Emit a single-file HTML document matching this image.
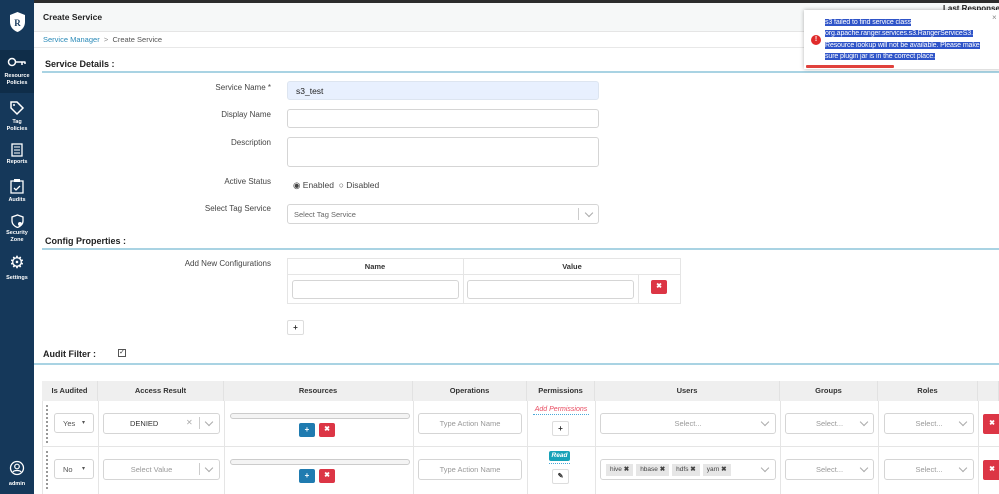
<!DOCTYPE html>
<html><head><meta charset="utf-8"><style>
*{box-sizing:border-box;margin:0;padding:0}
body{width:999px;height:494px;overflow:hidden;position:relative;background:#fff;font-family:"Liberation Sans",sans-serif;font-size:8px;color:#333}
.a{position:absolute}
.sb{left:0;top:0;width:34px;height:494px;background:#15385a}
.si{position:absolute;left:0;width:34px;text-align:center;color:#fff;font-size:5.5px;font-weight:bold;line-height:7px}
.lbl{position:absolute;right:728px;font-size:8px;color:#444;text-align:right}
.inp{position:absolute;border:1px solid #d5d5d5;border-radius:3px;background:#fff}
.hd{position:absolute;font-weight:bold;font-size:9px;color:#222}
.ln{position:absolute;left:42px;right:0;height:2px;background:#a9d3e3}
.th{position:absolute;top:381px;height:20px;background:#efefef;border-right:1px solid #e2e2e2;font-weight:bold;font-size:7.5px;text-align:center;line-height:20px;color:#333}
.ph{color:#999;font-size:7.5px;text-align:center}
.btn{position:absolute;width:16px;height:14px;border-radius:2px;color:#fff;font-size:8px;text-align:center;line-height:14px;font-weight:bold}
.bl{background:#1f7bb0}.rd{background:#dc3545}
.wb{position:absolute;border:1px solid #ddd;border-radius:2px;background:#fff;text-align:center;font-size:8px;font-weight:bold;color:#333}
.chev{position:absolute;width:8px;height:8px}
.chev:before{content:"";position:absolute;left:1px;top:0;width:5px;height:5px;border-right:1px solid #aaa;border-bottom:1px solid #aaa;transform:rotate(45deg)}
.tag{display:inline-block;background:#e6e6e6;padding:0 4px;margin-right:3px;height:12px;line-height:12px;font-size:6.5px;color:#444}
</style></head><body>
<div class="a" style="left:0;top:0;width:999px;height:3px;background:#2c2c2c"></div>
<div class="a" style="left:34px;top:3px;width:965px;height:29px;background:#f6f8f8;border-bottom:1px solid #e5e5e5"></div>
<div class="a" style="left:43px;top:12px;font-size:8.5px;font-weight:bold;color:#222">Create Service</div>
<div class="a" style="left:943px;top:4px;font-size:8px;font-weight:bold;color:#222;white-space:nowrap">Last Response Time</div>
<div class="a" style="left:34px;top:32px;width:965px;height:16px;border-bottom:1px solid #e8e8e8"></div>
<div class="a" style="left:43px;top:35px;font-size:7.5px;color:#2a8ab8">Service Manager <span style="color:#888">&nbsp;&gt;&nbsp;</span> <span style="color:#555">Create Service</span></div>

<div class="a sb"></div>
<div class="a" style="left:0;top:50px;width:34px;height:43px;background:#0f2d49"></div>
<svg class="a" style="left:8px;top:11px" width="19" height="22" viewBox="0 0 19 22"><path d="M9.5 1L17 4v7c0 5-3.5 8.5-7.5 10C5.5 19.5 2 16 2 11V4z" fill="#fff"/><text x="9.5" y="15" font-size="9" font-weight="bold" text-anchor="middle" fill="#15385a" font-family="Liberation Serif">R</text></svg>
<svg class="a" style="left:7px;top:57px" width="20" height="10"><circle cx="5" cy="5" r="3.5" fill="none" stroke="#fff" stroke-width="1.5"/><path d="M8.5 5h10M15 5v3M18 5v2" stroke="#fff" stroke-width="1.5" fill="none"/></svg>
<div class="si" style="top:73px">Resource<br>Policies</div>
<svg class="a" style="left:9px;top:100px" width="16" height="16"><path d="M2 2h6l6 6-6 6-6-6z" fill="none" stroke="#fff" stroke-width="1.5"/><circle cx="5" cy="5" r="1" fill="#fff"/></svg>
<div class="si" style="top:119px">Tag<br>Policies</div>
<svg class="a" style="left:11px;top:143px" width="12" height="14"><rect x="1" y="1" width="10" height="12" fill="none" stroke="#fff" stroke-width="1.3"/><path d="M3 4h6M3 7h6M3 10h6" stroke="#fff"/></svg>
<div class="si" style="top:159px">Reports</div>
<svg class="a" style="left:10px;top:178px" width="14" height="16"><path d="M1 3h12v12H1z" fill="none" stroke="#fff" stroke-width="1.3"/><rect x="4" y="1" width="6" height="3" fill="#fff"/><path d="M4 10l2 2 4-4" stroke="#fff" fill="none" stroke-width="1.3"/></svg>
<div class="si" style="top:197px">Audits</div>
<svg class="a" style="left:11px;top:214px" width="13" height="14"><path d="M6.5 1L12 3v4c0 3-2.5 5.5-5.5 6.5C3.5 12.5 1 10 1 7V3z" fill="none" stroke="#fff" stroke-width="1.3"/><circle cx="9" cy="10" r="2" fill="#fff"/></svg>
<div class="si" style="top:230px">Security<br>Zone</div>
<div class="a" style="left:5px;top:253px;width:24px;text-align:center;color:#fff;font-size:17px;line-height:20px">⚙</div>
<div class="si" style="top:275px">Settings</div>
<svg class="a" style="left:9px;top:460px" width="16" height="16"><circle cx="8" cy="8" r="6.5" fill="none" stroke="#fff" stroke-width="1.3"/><circle cx="8" cy="6.5" r="2.3" fill="none" stroke="#fff" stroke-width="1.2"/><path d="M4 12c1-2 7-2 8 0" stroke="#fff" fill="none" stroke-width="1.2"/></svg>
<div class="si" style="top:481px">admin</div>

<div class="hd" style="left:45px;top:59px">Service Details :</div>
<div class="ln" style="top:71px"></div>
<div class="lbl" style="top:83px">Service Name *</div>
<div class="inp" style="left:287px;top:81px;width:312px;height:19px;background:#e8f0fe;border-color:#dde5f0;font-size:8.5px;padding:4px 8px;color:#222">s3_test</div>
<div class="lbl" style="top:110px">Display Name</div>
<div class="inp" style="left:287px;top:109px;width:312px;height:19px"></div>
<div class="lbl" style="top:138px">Description</div>
<div class="inp" style="left:287px;top:137px;width:312px;height:30px"></div>
<div class="lbl" style="top:177px">Active Status</div>
<div class="a" style="left:293px;top:180px;font-size:8.5px;color:#444">◉ Enabled &nbsp;○ Disabled</div>
<div class="lbl" style="top:204px">Select Tag Service</div>
<div class="inp" style="left:287px;top:204px;width:312px;height:20px;font-size:7.5px;color:#666;padding:5px 6px">Select Tag Service</div>
<div class="a" style="left:578px;top:208px;width:1px;height:12px;background:#ccc"></div>
<div class="chev" style="left:585px;top:210px"></div>

<div class="hd" style="left:45px;top:236px">Config Properties :</div>
<div class="ln" style="top:248px"></div>
<div class="lbl" style="top:259px">Add New Configurations</div>
<div class="a" style="left:287px;top:258px;width:394px;height:46px;border:1px solid #e5e5e5"></div>
<div class="a" style="left:287px;top:258px;width:394px;height:17px;border-bottom:1px solid #e5e5e5"></div>
<div class="a" style="left:463px;top:258px;width:1px;height:46px;background:#e5e5e5"></div>
<div class="a" style="left:638px;top:275px;width:1px;height:29px;background:#e5e5e5"></div>
<div class="a" style="left:287px;top:262px;width:176px;text-align:center;font-weight:bold;font-size:7.5px">Name</div>
<div class="a" style="left:463px;top:262px;width:218px;text-align:center;font-weight:bold;font-size:7.5px">Value</div>
<div class="inp" style="left:292px;top:280px;width:167px;height:19px"></div>
<div class="inp" style="left:467px;top:280px;width:167px;height:19px"></div>
<div class="btn rd" style="left:651px;top:280px;font-size:7px">✖</div>
<div class="wb" style="left:287px;top:320px;width:17px;height:15px;line-height:13px">+</div>

<div class="hd" style="left:43px;top:349px">Audit Filter :</div>
<div class="a" style="left:118px;top:349px;width:8px;height:8px;border:1px solid #555;font-size:7px;line-height:6px;text-align:center">✓</div>
<div class="a" style="left:34px;top:363px;width:965px;height:2px;background:#a9d3e3"></div>

<div class="th" style="left:42px;width:56px">Is Audited</div>
<div class="th" style="left:98px;width:126px">Access Result</div>
<div class="th" style="left:224px;width:189px">Resources</div>
<div class="th" style="left:413px;width:114px">Operations</div>
<div class="th" style="left:527px;width:68px">Permissions</div>
<div class="th" style="left:595px;width:185px">Users</div>
<div class="th" style="left:780px;width:98px">Groups</div>
<div class="th" style="left:878px;width:100px">Roles</div>
<div class="th" style="left:978px;width:21px"></div>
<div class="a" style="left:42px;top:446px;width:957px;height:1px;background:#e5e5e5"></div>
<div class="a" style="left:42px;top:401px;width:1px;height:93px;background:#e5e5e5"></div>
<div class="a" style="left:98px;top:401px;width:1px;height:93px;background:#e5e5e5"></div>
<div class="a" style="left:224px;top:401px;width:1px;height:93px;background:#e5e5e5"></div>
<div class="a" style="left:413px;top:401px;width:1px;height:93px;background:#e5e5e5"></div>
<div class="a" style="left:527px;top:401px;width:1px;height:93px;background:#e5e5e5"></div>
<div class="a" style="left:595px;top:401px;width:1px;height:93px;background:#e5e5e5"></div>
<div class="a" style="left:780px;top:401px;width:1px;height:93px;background:#e5e5e5"></div>
<div class="a" style="left:878px;top:401px;width:1px;height:93px;background:#e5e5e5"></div>
<div class="a" style="left:978px;top:401px;width:1px;height:93px;background:#e5e5e5"></div>

<!-- row 1 -->
<div class="a" style="left:46px;top:405px;width:2px;height:38px;border-left:2px dotted #999"></div>
<div class="inp" style="left:54px;top:413px;width:40px;height:20px;font-size:7.5px;padding:5px 8px;color:#555">Yes <span style="float:right;font-size:6px">▾</span></div>
<div class="inp" style="left:103px;top:413px;width:117px;height:21px;font-size:7.5px;padding:5px 26px;color:#333">DENIED</div>
<div class="a" style="left:186px;top:418px;color:#aaa;font-size:8px">✕</div>
<div class="a" style="left:199px;top:417px;width:1px;height:12px;background:#ccc"></div>
<div class="chev" style="left:205px;top:419px"></div>
<div class="a" style="left:230px;top:413px;width:180px;height:6px;border:1px solid #ccc;border-radius:3px;background:#f4f4f4"></div>
<div class="btn bl" style="left:299px;top:423px">+</div>
<div class="btn rd" style="left:319px;top:423px;font-size:7px">✖</div>
<div class="inp ph" style="left:418px;top:413px;width:104px;height:21px;line-height:19px">Type Action Name</div>
<div class="a" style="left:533px;top:406px;width:56px;text-align:center;color:#e84a5f;font-style:italic;font-size:7px;border-bottom:1px dotted #4aa8d8;padding-bottom:1px">Add Permissions</div>
<div class="wb" style="left:552px;top:421px;width:17px;height:15px;line-height:13px">+</div>
<div class="inp ph" style="left:600px;top:413px;width:176px;height:21px;line-height:19px">Select...</div>
<div class="chev" style="left:761px;top:419px"></div>
<div class="inp ph" style="left:785px;top:413px;width:89px;height:21px;line-height:19px">Select...</div>
<div class="chev" style="left:860px;top:419px"></div>
<div class="inp ph" style="left:884px;top:413px;width:90px;height:21px;line-height:19px">Select...</div>
<div class="chev" style="left:959px;top:419px"></div>
<div class="btn rd" style="left:983px;top:414px;height:20px;line-height:20px;width:18px;font-size:7px">✖</div>

<!-- row 2 -->
<div class="a" style="left:46px;top:451px;width:2px;height:38px;border-left:2px dotted #999"></div>
<div class="inp" style="left:54px;top:459px;width:40px;height:20px;font-size:7.5px;padding:5px 8px;color:#555">No <span style="float:right;font-size:6px">▾</span></div>
<div class="inp ph" style="left:103px;top:459px;width:117px;height:21px;line-height:19px;padding-right:20px">Select Value</div>
<div class="a" style="left:199px;top:463px;width:1px;height:12px;background:#ccc"></div>
<div class="chev" style="left:205px;top:465px"></div>
<div class="a" style="left:230px;top:459px;width:180px;height:6px;border:1px solid #ccc;border-radius:3px;background:#f4f4f4"></div>
<div class="btn bl" style="left:299px;top:469px">+</div>
<div class="btn rd" style="left:319px;top:469px;font-size:7px">✖</div>
<div class="inp ph" style="left:418px;top:459px;width:104px;height:21px;line-height:19px">Type Action Name</div>
<div class="a" style="left:549px;top:451px;width:21px;height:10px;background:#17a2b8;border-radius:2px;color:#fff;font-style:italic;font-weight:bold;font-size:6.5px;text-align:center;line-height:10px">Read</div>
<div class="a" style="left:549px;top:463px;width:21px;border-bottom:1px dotted #4aa8d8"></div>
<div class="wb" style="left:552px;top:469px;width:17px;height:15px;line-height:13px;font-size:7px">✎</div>
<div class="inp" style="left:600px;top:459px;width:176px;height:21px;padding:4px 5px"><span class="tag">hive <b>✖</b></span><span class="tag">hbase <b>✖</b></span><span class="tag">hdfs <b>✖</b></span><span class="tag">yarn <b>✖</b></span></div>
<div class="chev" style="left:761px;top:465px"></div>
<div class="inp ph" style="left:785px;top:459px;width:89px;height:21px;line-height:19px">Select...</div>
<div class="chev" style="left:860px;top:465px"></div>
<div class="inp ph" style="left:884px;top:459px;width:90px;height:21px;line-height:19px">Select...</div>
<div class="chev" style="left:959px;top:465px"></div>
<div class="btn rd" style="left:983px;top:460px;height:20px;line-height:20px;width:18px;font-size:7px">✖</div>

<!-- toast -->
<div class="a" style="left:804px;top:10px;width:197px;height:59px;background:#fff;box-shadow:0 0 4px rgba(0,0,0,.3)"></div>
<div class="a" style="left:811px;top:35px;width:10px;height:10px;border-radius:50%;background:#e02b2b;color:#fff;font-size:7px;font-weight:bold;text-align:center;line-height:10px">!</div>
<div class="a" style="left:825px;top:17px;width:175px;font-size:7px;line-height:11.3px;color:#fff;white-space:nowrap;letter-spacing:-0.1px"><span style="background:#2f54c8">s3 failed to find service class</span><br><span style="background:#2f54c8">org.apache.ranger.services.s3.RangerServiceS3.</span><br><span style="background:#2f54c8">Resource lookup will not be available. Please make</span><br><span style="background:#2f54c8">sure plugin jar is in the correct place.</span></div>
<div class="a" style="left:992px;top:13px;font-size:8px;color:#888">×</div>
<div class="a" style="left:806px;top:65px;width:88px;height:3px;background:#e0413c;border-radius:1px"></div>
</body></html>
